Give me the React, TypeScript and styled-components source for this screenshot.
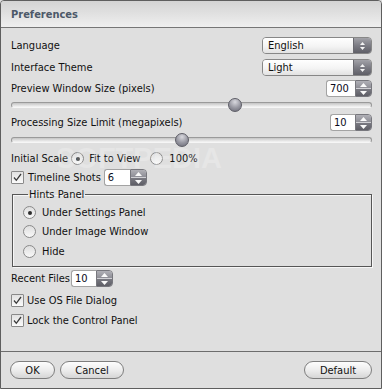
import React from "react";
import styled, { createGlobalStyle } from "styled-components";

const Global = createGlobalStyle`
  html, body { margin: 0; padding: 0; background: #dfdfdf; }
  body {
    font-family: "DejaVu Sans Condensed", "Liberation Sans", sans-serif;
    font-size: 11px;
    color: #111;
  }
  * { box-sizing: border-box; }
`;

const Frame = styled.div`
  position: relative;
  width: 382px;
  height: 389px;
  border: 1px solid #5e5e5e;
  border-radius: 4px 4px 0 0;
  background: #dfdfdf;
  display: flex;
  flex-direction: column;
  overflow: hidden;
`;

const TitleBar = styled.div`
  height: 27px;
  flex: none;
  background: linear-gradient(#d3d3d3, #efefef);
  border-bottom: 1px solid #767676;
  display: flex;
  align-items: center;
  padding: 1px 0 0 10px;
  font-weight: bold;
  font-size: 11px;
  color: #4c5868;
`;

const Body = styled.div`
  flex: 1;
  display: flex;
  flex-direction: column;
  padding: 0 9px 0 10px;
`;

const Row = styled.div<{ $mt: number; $h?: number }>`
  display: flex;
  align-items: center;
  height: ${(p) => p.$h ?? 17}px;
  margin-top: ${(p) => p.$mt}px;
  flex: none;
`;

const Label = styled.span<{ $ml?: number }>`
  white-space: nowrap;
  margin-left: ${(p) => p.$ml ?? 0}px;
`;

const Grow = styled.div`
  flex: 1;
`;

const Gap = styled.div<{ $w: number }>`
  flex: none;
  width: ${(p) => p.$w}px;
`;

/* ---------- select ---------- */
const SelectBox = styled.div`
  width: 110px;
  height: 17px;
  display: flex;
  border: 1px solid #878787;
  border-radius: 4px;
  overflow: hidden;
`;

const SelectText = styled.div`
  flex: 1;
  background: linear-gradient(#ffffff, #f4f4f4 55%, #e2e2e2);
  padding-left: 5px;
  display: flex;
  align-items: center;
  color: #101010;
`;

const DarkButton = styled.div<{ $w: number }>`
  width: ${(p) => p.$w}px;
  flex: none;
  background: linear-gradient(#a2a2a8, #7c7c84 50%, #5f5f67);
  border-left: 1px solid #6a6a70;
  display: flex;
  flex-direction: column;
  align-items: center;
  justify-content: center;
`;

const Select = ({ value }: { value: string }) => (
  <SelectBox>
    <SelectText>{value}</SelectText>
    <DarkButton $w={18}>
      <svg width="7" height="10" viewBox="0 0 7 10">
        <path d="M3.5 1 L6 4 L1 4 Z" fill="#f4f4f4" />
        <path d="M3.5 9 L6 6 L1 6 Z" fill="#f4f4f4" />
      </svg>
    </DarkButton>
  </SelectBox>
);

/* ---------- spinner ---------- */
const SpinBox = styled.div<{ $w: number }>`
  width: ${(p) => p.$w}px;
  height: 17px;
  display: flex;
  flex: none;
`;

const SpinInput = styled.div`
  flex: 1;
  background: #fff;
  border: 1px solid #a3a3a3;
  border-right: none;
  border-radius: 3px 0 0 3px;
  padding-left: 3px;
  display: flex;
  align-items: center;
  color: #0a0a20;
`;

const SpinButtons = styled.div`
  width: 17px;
  flex: none;
  border: 1px solid #77777d;
  border-radius: 0 4px 4px 0;
  overflow: hidden;
  display: flex;
  flex-direction: column;
`;

const SpinHalf = styled.div<{ $down?: boolean }>`
  flex: 1;
  display: flex;
  align-items: center;
  justify-content: center;
  background: ${(p) =>
    p.$down
      ? "linear-gradient(#7a7a82, #5e5e66)"
      : "linear-gradient(#b0b0b6, #8e8e96)"};
  border-top: ${(p) => (p.$down ? "1px solid #d0d0d4" : "none")};
`;

const Spinner = ({ value, w }: { value: string; w: number }) => (
  <SpinBox $w={w}>
    <SpinInput>{value}</SpinInput>
    <SpinButtons>
      <SpinHalf>
        <svg width="7" height="4" viewBox="0 0 7 4">
          <path d="M3.5 0 L7 4 L0 4 Z" fill="#fafafa" />
        </svg>
      </SpinHalf>
      <SpinHalf $down>
        <svg width="7" height="4" viewBox="0 0 7 4">
          <path d="M3.5 4 L7 0 L0 0 Z" fill="#fafafa" />
        </svg>
      </SpinHalf>
    </SpinButtons>
  </SpinBox>
);

/* ---------- slider ---------- */
const SliderWrap = styled.div`
  position: relative;
  flex: 1;
  height: 100%;
  display: flex;
  align-items: center;
`;

const Track = styled.div`
  width: 100%;
  height: 6px;
  border: 1px solid #9a9a9a;
  border-bottom-color: #f6f6f6;
  border-radius: 3px;
  background: linear-gradient(#c4c4c4, #e2e2e2 60%, #f4f4f4);
`;

const Thumb = styled.div`
  position: absolute;
  top: 50%;
  width: 14px;
  height: 14px;
  margin: -7px 0 0 -7px;
  border-radius: 50%;
  border: 1px solid #5d5d66;
  background: radial-gradient(circle at 50% 25%, #d8d8de, #9696a0 55%, #6a6a76);
`;

const Slider = ({ pct }: { pct: number }) => (
  <SliderWrap>
    <Track />
    <Thumb style={{ left: `${pct}%` }} />
  </SliderWrap>
);

/* ---------- radio / checkbox ---------- */
const RadioCircle = styled.span<{ $ml?: number }>`
  width: 13px;
  height: 13px;
  flex: none;
  margin-left: ${(p) => p.$ml ?? 0}px;
  border-radius: 50%;
  border: 1px solid #8a8a8a;
  background: linear-gradient(#dedede, #f8f8f8);
  display: flex;
  align-items: center;
  justify-content: center;
`;

const RadioDot = styled.span`
  width: 4px;
  height: 4px;
  border-radius: 50%;
  background: #2c2c2c;
`;

const Radio = ({ checked, ml }: { checked?: boolean; ml?: number }) => (
  <RadioCircle $ml={ml}>{checked && <RadioDot />}</RadioCircle>
);

const CheckSquare = styled.span`
  width: 13px;
  height: 13px;
  flex: none;
  border: 1px solid #8a8a8a;
  border-radius: 1px;
  background: linear-gradient(#e2e2e2, #fafafa);
  display: flex;
  align-items: center;
  justify-content: center;
`;

const Check = () => (
  <CheckSquare>
    <svg width="11" height="11" viewBox="0 0 11 11">
      <path d="M2 5.5 L4.3 8.3 L9 2" fill="none" stroke="#3a3a3a" strokeWidth="1.3" />
    </svg>
  </CheckSquare>
);

/* ---------- group ---------- */
const Group = styled.fieldset`
  margin: 2px 0 0 1px;
  padding: 0 0 0 10px;
  height: 79px;
  flex: none;
  border: 1px solid #565656;
  box-shadow: inset 1px 1px 0 #f6f6f6, 1px 1px 0 #f6f6f6;
  display: flex;
  flex-direction: column;
`;

const Legend = styled.legend`
  padding: 0 1px;
  margin-left: 5px;
  font-size: 11px;
  line-height: 13px;
`;

/* ---------- footer ---------- */
const Footer = styled.div`
  height: 37px;
  flex: none;
  border-top: 1px solid #6d6d6d;
  display: flex;
  align-items: flex-start;
  padding: 9px 9px 0 9px;
  gap: 5px;
`;

const PillButton = styled.div<{ $w: number }>`
  width: ${(p) => p.$w}px;
  height: 18px;
  border: 1px solid #7e7e7e;
  border-radius: 9px;
  background: linear-gradient(#fdfdfd, #ededed 50%, #d6d6d6);
  display: flex;
  align-items: center;
  justify-content: center;
  color: #111;
`;

const Watermark = styled.div`
  position: absolute;
  left: 55px;
  top: 141px;
  font-family: "Liberation Sans", sans-serif;
  font-weight: bold;
  font-size: 29px;
  color: rgba(255, 255, 255, 0.22);
  pointer-events: none;
`;

export default function App() {
  return (
    <>
      <Global />
      <Frame>
        <TitleBar>Preferences</TitleBar>
        <Body>
          <Row $mt={9}>
            <Label>Language</Label>
            <Grow />
            <Select value="English" />
          </Row>
          <Row $mt={5}>
            <Label>Interface Theme</Label>
            <Grow />
            <Select value="Light" />
          </Row>
          <Row $mt={4}>
            <Label>Preview Window Size (pixels)</Label>
            <Grow />
            <Spinner value="700" w={46} />
          </Row>
          <Row $mt={0} $h={16}>
            <Slider pct={62} />
          </Row>
          <Row $mt={1}>
            <Label>Processing Size Limit (megapixels)</Label>
            <Grow />
            <Spinner value="10" w={42} />
          </Row>
          <Row $mt={1} $h={16}>
            <Slider pct={47.5} />
          </Row>
          <Row $mt={2}>
            <Label>Initial Scale</Label>
            <Radio checked ml={3} />
            <Label $ml={5}>Fit to View</Label>
            <Radio ml={10} />
            <Label $ml={6}>100%</Label>
          </Row>
          <Row $mt={2}>
            <Check />
            <Label $ml={4}>Timeline Shots</Label>
            <Gap $w={3} />
            <Spinner value="6" w={43} />
          </Row>
          <Group>
            <Legend>Hints Panel</Legend>
            <Row $mt={3}>
              <Radio checked />
              <Label $ml={6}>Under Settings Panel</Label>
            </Row>
            <Row $mt={2}>
              <Radio />
              <Label $ml={6}>Under Image Window</Label>
            </Row>
            <Row $mt={3}>
              <Radio />
              <Label $ml={6}>Hide</Label>
            </Row>
          </Group>
          <Row $mt={3}>
            <Label>Recent Files</Label>
            <Gap $w={1} />
            <Spinner value="10" w={42} />
          </Row>
          <Row $mt={5}>
            <Check />
            <Label $ml={3}>Use OS File Dialog</Label>
          </Row>
          <Row $mt={3}>
            <Check />
            <Label $ml={3}>Lock the Control Panel</Label>
          </Row>
        </Body>
        <Footer>
          <PillButton $w={45}>OK</PillButton>
          <PillButton $w={64}>Cancel</PillButton>
          <Grow />
          <PillButton $w={68}>Default</PillButton>
        </Footer>
        <Watermark>SOFTPEDIA</Watermark>
      </Frame>
    </>
  );
}
